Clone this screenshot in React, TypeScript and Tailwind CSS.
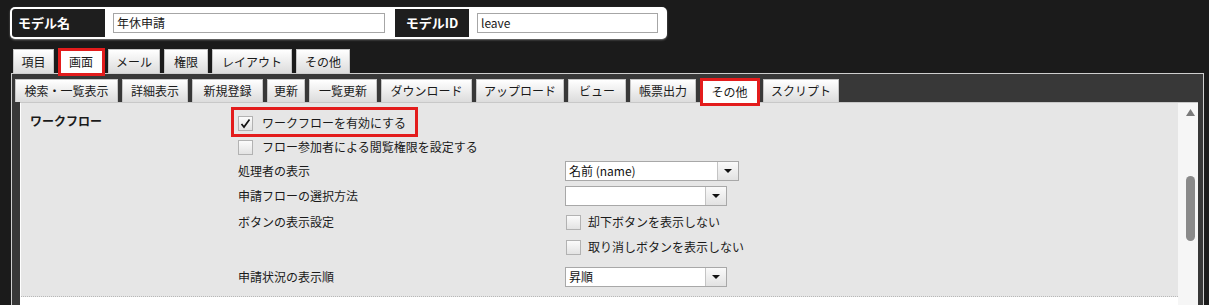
import { ReactNode } from 'react';

const topTabs = [
  { label: '項目', w: 'w-[41px]' },
  { label: '画面', w: 'w-[46px]', active: true },
  { label: 'メール', w: 'w-[52px]' },
  { label: '権限', w: 'w-[44px]' },
  { label: 'レイアウト', w: 'w-[80px]' },
  { label: 'その他', w: 'w-[54px]' },
];

const subTabs = [
  { label: '検索・一覧表示', w: 'w-[103px]' },
  { label: '詳細表示', w: 'w-[66px]' },
  { label: '新規登録', w: 'w-[71px]' },
  { label: '更新', w: 'w-[38px]' },
  { label: '一覧更新', w: 'w-[68px]' },
  { label: 'ダウンロード', w: 'w-[91px]' },
  { label: 'アップロード', w: 'w-[88px]' },
  { label: 'ビュー', w: 'w-[58px]' },
  { label: '帳票出力', w: 'w-[66px]' },
  { label: 'その他', w: 'w-[59px]', active: true },
  { label: 'スクリプト', w: 'w-[76px]' },
];

function Tab({ label, w, active, h }: { label: string; w: string; active?: boolean; h: string }) {
  return (
    <div
      className={`relative ${w} ${h} flex items-center justify-center border border-b-0 border-[#c6c6c6] text-[#1a1a1a] leading-[16px] ${
        active ? 'bg-white' : 'bg-linear-to-b from-white to-[#dcdcdc]'
      }`}
    >
      {label}
      {active && <span className="absolute -left-[1px] -top-[2px] -right-[2px] h-[28px] border-[3px] border-[#e31c1c]" />}
    </div>
  );
}

function Check({ checked }: { checked?: boolean }) {
  return (
    <span className="w-[15px] h-[15px] shrink-0 border border-[#b2b2b2] bg-linear-to-b from-[#fbfbfb] to-[#e3e3e3] flex items-center justify-center">
      {checked && (
        <svg width="11" height="11" viewBox="0 0 11 11">
          <path d="M1.5 6 L4 9 L9.5 1.5" fill="none" stroke="#111" strokeWidth="1.7" />
        </svg>
      )}
    </span>
  );
}

function Select({ value, w }: { value?: string; w: string }) {
  return (
    <div className={`${w} h-[20px] border border-[#a8a8a8] bg-white flex`}>
      <span className="flex-1 pl-[3px] leading-[18px] text-[#111]">{value}</span>
      <span className="w-[21px] border-l border-[#c4c4c4] bg-linear-to-b from-[#fafafa] to-[#e2e2e2] flex items-center justify-center">
        <svg width="8" height="4" viewBox="0 0 8 4">
          <path d="M0 0 H8 L4 4 Z" fill="#111" />
        </svg>
      </span>
    </div>
  );
}

function Row({ h, label, children }: { h: string; label?: string; children?: ReactNode }) {
  return (
    <div className={`${h} flex items-center`}>
      <div className="w-[327px] shrink-0">{label}</div>
      {children}
    </div>
  );
}

export default function App() {
  return (
    <div className="w-[1209px] h-[305px] overflow-hidden bg-[#1b1b1b] text-[12px] text-[#1a1a1a] font-['Noto_Sans_CJK_JP',sans-serif]">
      {/* model header */}
      <div className="pt-[7px] pl-[10px]">
        <div className="w-[657px] h-[32px] bg-white rounded-[5px] p-[2px] flex items-center shadow-[0_1px_2px_#777]">
          <div className="w-[93px] h-[28px] bg-[#1e1e1e] rounded-tl-[3px] rounded-bl-[3px] text-white font-bold text-[13px] pl-[6px] flex items-center">
            モデル名
          </div>
          <div className="ml-[8px] w-[272px] h-[20px] border border-[#a6a6a6] pl-[3px] leading-[18px]">年休申請</div>
          <div className="ml-[10px] w-[74px] h-[28px] bg-[#1e1e1e] text-white font-bold text-[13px] flex items-center justify-center">
            モデルID
          </div>
          <div className="ml-[8px] w-[181px] h-[20px] border border-[#a6a6a6] pl-[3px] leading-[18px]">leave</div>
        </div>
      </div>

      {/* top tabs */}
      <div className="relative z-10 mt-[10px] pl-[13px] h-[24px] flex items-start gap-[4px]">
        {topTabs.map((t) => (
          <Tab key={t.label} label={t.label} w={t.w} active={t.active} h={t.active ? 'h-[25px]' : 'h-[24px]'} />
        ))}
      </div>

      {/* panel */}
      <div className="ml-[11px] w-[1193px] h-[240px] bg-[#383838] border-t border-l border-r border-[#cfcfcf]">
        <div className="relative z-10 pt-[5px] pl-[3px] h-[28px] flex items-start gap-[4px]">
          {subTabs.map((t) => (
            <Tab key={t.label} label={t.label} w={t.w} active={t.active} h={t.active ? 'h-[24px]' : 'h-[23px]'} />
          ))}
        </div>

        <div className="ml-[8px] w-[1178px] bg-white border-t border-[#c8c8c8] flex">
          <div className="w-[1158px] border-l border-white">
            <div className="h-[194px] bg-[#e6e6e6] border-b border-dotted border-[#b8b8b8] flex">
              <div className="w-[217px] shrink-0 pl-[9px] pt-[10px] font-bold leading-[16px]">ワークフロー</div>
              <div className="pt-[8px] leading-[16px]">
                <div className="relative h-[24px] flex items-center gap-[9px]">
                  <Check checked />
                  <span>ワークフローを有効にする</span>
                  <span className="absolute -left-[7px] top-[-4px] w-[187px] h-[30px] border-[3px] border-[#e31c1c]" />
                </div>
                <div className="h-[24px] flex items-center gap-[9px]">
                  <Check />
                  <span>フロー参加者による閲覧権限を設定する</span>
                </div>
                <Row h="h-[24px]" label="処理者の表示">
                  <Select value="名前 (name)" w="w-[174px]" />
                </Row>
                <Row h="h-[26px]" label="申請フローの選択方法">
                  <Select w="w-[162px]" />
                </Row>
                <Row h="h-[26px]" label="ボタンの表示設定">
                  <div className="pl-[1px] flex items-center gap-[7px]">
                    <Check />
                    <span>却下ボタンを表示しない</span>
                  </div>
                </Row>
                <Row h="h-[24px]">
                  <div className="pl-[1px] flex items-center gap-[7px]">
                    <Check />
                    <span>取り消しボタンを表示しない</span>
                  </div>
                </Row>
                <Row h="h-[36px]" label="申請状況の表示順">
                  <Select value="昇順" w="w-[162px]" />
                </Row>
              </div>
            </div>
            <div className="h-[20px] bg-white" />
          </div>

          {/* scrollbar */}
          <div className="w-[20px] bg-[#f6f6f6] pl-[8px] pt-[6px]">
            <svg width="9" height="7" viewBox="0 0 9 7">
              <path d="M0 7 L4.5 0 L9 7 Z" fill="#7a7a7a" />
            </svg>
            <div className="mt-[60px] w-[9px] h-[65px] rounded-full bg-[#8a8a8a]" />
          </div>
        </div>
      </div>
    </div>
  );
}
